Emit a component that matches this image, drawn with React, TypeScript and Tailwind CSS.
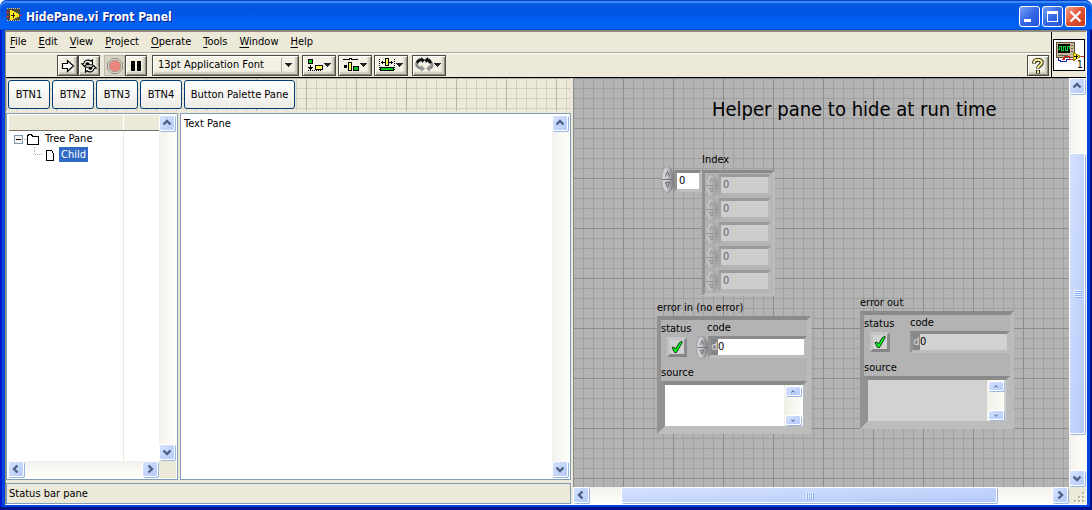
import { useId } from "react";
import type { ReactNode } from "react";
import { clsx } from "clsx";

type Direction = "up" | "down" | "left" | "right";

const MENUS = ["File", "Edit", "View", "Project", "Operate", "Tools", "Window", "Help"];
const PALETTE_BUTTONS = ["BTN1", "BTN2", "BTN3", "BTN4"];

const CHEVRONS: Record<Direction, string> = {
  up: "M1.5 6.5 5 3l3.5 3.5",
  down: "M1.5 3.5 5 7l3.5-3.5",
  left: "M6.5 1.5 3 5l3.5 3.5",
  right: "M3.5 1.5 7 5 3.5 8.5",
};

const SCROLL_FACE =
  "rounded-[2px] border border-white bg-linear-to-br from-[#d6e2fe] to-[#b4cafa] shadow-[1px_1px_0_#98b4e0]";

/* ---------- scroll bars ---------- */

function ScrollButton({ direction }: { direction: Direction }) {
  return (
    <button
      type="button"
      aria-label={`Scroll ${direction}`}
      className={clsx("flex size-4 shrink-0 items-center justify-center", SCROLL_FACE)}
    >
      <svg viewBox="0 0 10 10" className="size-[10px]">
        <path d={CHEVRONS[direction]} fill="none" stroke="#4d6185" strokeWidth="2.4" />
      </svg>
    </button>
  );
}

function VerticalScrollBar({ children }: { children?: ReactNode }) {
  return (
    <div className="flex w-[17px] shrink-0 flex-col items-start justify-between bg-linear-to-r from-[#f3f1ec] to-[#fefefb] pb-px">
      <ScrollButton direction="up" />
      {children}
      <ScrollButton direction="down" />
    </div>
  );
}

function HorizontalScrollBar({ children }: { children?: ReactNode }) {
  return (
    <div className="flex h-[17px] min-w-0 flex-1 items-start justify-between bg-linear-to-b from-[#f3f1ec] to-[#fefefb] pr-px">
      <ScrollButton direction="left" />
      {children}
      <ScrollButton direction="right" />
    </div>
  );
}

/* ---------- title bar ---------- */

function ViIcon() {
  return (
    <svg viewBox="0 0 16 16" className="size-4" shapeRendering="crispEdges">
      <path fill="#4a4a40" d="M1 1h13v13H1z" />
      <path stroke="#c9c9b8" strokeDasharray="1 1" d="M1 1.500h13M1 13.500h13" />
      <path stroke="#e02020" d="M0 5.500h3M0 9.500h3M12 8.500h4" />
      <path fill="#ffe818" d="M4 3h2v1h2v1h2v1h2v1h1v3h-2v1H9v1H7v1H4z" />
      <path stroke="#222" d="M5 8.500h4M7.500 6v5" />
    </svg>
  );
}

function TitleBar() {
  return (
    <header className="flex h-[30px] shrink-0 items-center justify-between rounded-t-[7px] bg-linear-to-b from-[#0f5fe0] from-0% via-[#0054e3] via-35% to-[#0064fa] to-90% pr-[6px] pl-[6px] shadow-[inset_0_1px_0_#0a45c8,inset_0_3px_1px_#3a8cf8,inset_0_-1px_0_#0049cf]">
      <div className="flex items-center gap-1">
        <ViIcon />
        <h1 className="pt-[3px] font-[DejaVu_Sans_Condensed,sans-serif] text-[12px] leading-4 font-bold text-white [text-shadow:1px_1px_0_#0a1883]">
          HidePane.vi Front Panel
        </h1>
      </div>
      <div className="flex gap-[2px] pt-[3px]">
        <button
          type="button"
          aria-label="Minimize"
          className="flex size-[21px] items-center justify-center rounded-[3px] border border-white bg-linear-to-br from-[#7ba0f5] via-[#3468e4] to-[#2454d8]"
        >
          <svg viewBox="0 0 19 19" className="size-[19px]">
            <path fill="#fff" d="M4 12h7v3H4z" />
          </svg>
        </button>
        <button
          type="button"
          aria-label="Maximize"
          className="flex size-[21px] items-center justify-center rounded-[3px] border border-white bg-linear-to-br from-[#7ba0f5] via-[#3468e4] to-[#2454d8]"
        >
          <svg viewBox="0 0 19 19" className="size-[19px]">
            <path fill="#fff" fillRule="evenodd" d="M4 4h11v11H4zM5 7v7h9V7z" />
          </svg>
        </button>
        <button
          type="button"
          aria-label="Close"
          className="flex size-[21px] items-center justify-center rounded-[3px] border border-white bg-linear-to-br from-[#f0a088] via-[#e05030] to-[#c83a18]"
        >
          <svg viewBox="0 0 19 19" className="size-[19px]">
            <path stroke="#fff" strokeWidth="2.300" d="m4.500 4.500 10 10m0-10-10 10" />
          </svg>
        </button>
      </div>
    </header>
  );
}

/* ---------- tool bar ---------- */

function ToolButton({ label, className, disabled, children }: {
  label: string;
  className?: string;
  disabled?: boolean;
  children: ReactNode;
}) {
  return (
    <button
      type="button"
      aria-label={label}
      disabled={disabled}
      className={clsx(
        "flex h-[21px] items-center justify-center border",
        disabled
          ? "border-[#bdbaac] bg-[#d8d5c6]"
          : "border-[#4d4b42] bg-[#f3f1e4] shadow-[inset_1px_1px_0_#fff,inset_-1px_-1px_0_#8e8c80,inset_-3px_-3px_2px_#cbc8b8]",
        className ?? "w-[22px]",
      )}
    >
      {children}
    </button>
  );
}

function AlignIcon() {
  return (
    <svg viewBox="0 0 28 17" className="h-[17px] w-[28px]" shapeRendering="crispEdges">
      <path fill="#00c820" stroke="#000" d="M3.500 2.500h4v4h-4z" />
      <path fill="#000" d="M5 8h1v2h2v1H7v1H6v1H5v-1H4v-1H3v-1h2z" />
      <path stroke="#000" strokeDasharray="1 1" d="M3 13.500h14" />
      <path fill="#ffff50" stroke="#000" d="M10.500 8.500h7v4h-7z" />
      <path fill="#222" d="M19 6h7v1h-1v1h-1v1h-1v1h-1V9h-1V8h-1V7h-1z" />
    </svg>
  );
}

function DistributeIcon() {
  return (
    <svg viewBox="0 0 28 17" className="h-[17px] w-[28px]" shapeRendering="crispEdges">
      <path fill="none" stroke="#000" d="M2 3V2.500h6V1.500h2v1h6V3" />
      <path fill="#000" d="M3 8h3v3H3z" />
      <path fill="#ffff50" stroke="#000" d="M7.500 5.500h3v8h-3z" />
      <path fill="#00c820" stroke="#000" d="M12.500 9.500h5v4h-5z" />
      <path fill="#222" d="M19 6h7v1h-1v1h-1v1h-1v1h-1V9h-1V8h-1V7h-1z" />
    </svg>
  );
}

function ResizeIcon() {
  return (
    <svg viewBox="0 0 28 17" className="h-[17px] w-[28px]" shapeRendering="crispEdges">
      <path stroke="#000" strokeDasharray="1 1" d="M2.500 2v12M17.500 2v12" />
      <path stroke="#000" d="M4 5.500h4M12 5.500h4M5.500 4v3M14.500 4v3" />
      <path fill="#ffff50" stroke="#000" d="M8.500 1.500h3v7h-3z" />
      <path fill="#00c820" stroke="#000" d="M3.500 10.500h13v3h-13z" />
      <path fill="#222" d="M19 6h7v1h-1v1h-1v1h-1v1h-1V9h-1V8h-1V7h-1z" />
    </svg>
  );
}

function ReorderIcon() {
  return (
    <svg viewBox="0 0 28 17" className="h-[17px] w-[28px]">
      <path fill="none" stroke="#8b8b8b" strokeWidth="2.800" d="M3 4c-3 3-1 7 4 7.500M14 4c4 2 4 6 0 7.500" />
      <path fill="#999" d="m6 8 4 3.500L6 15zM15 8l-4 3.500 4 3.500z" />
      <path fill="#111" d="M1 5c2-4 4-3.500 5-3.500V0l4 3.200L7 6V4.500C5 4.500 3 5 3 7zM17 6c-1-4-3-4.500-4-4.500V0L9 3.200 12 6V4.500c1 0 2 1 2 2z" />
      <path fill="#222" shapeRendering="crispEdges" d="M19 6h7v1h-1v1h-1v1h-1v1h-1V9h-1V8h-1V7h-1z" />
    </svg>
  );
}

function ToolBar() {
  return (
    <div className="flex h-[23px] items-center pr-[2px] pl-[51px]">
      <ToolButton label="Run" className="w-[21px]">
        <svg viewBox="0 0 14 14" className="size-[14px]">
          <path fill="#fff" stroke="#000" strokeWidth="1.200" d="M1.500 4.500h5v-3L12.500 7l-6 5.500v-3h-5z" />
        </svg>
      </ToolButton>
      <ToolButton label="Run continuously">
        <svg viewBox="0 0 16 14" className="h-[14px] w-4">
          <path
            fill="#fff"
            stroke="#000"
            strokeWidth="1.100"
            d="M3.500 7.500.8 4.800h1.700C3.500 1 7.500.2 10 2.200L11.500.8v5H6.500L8 4.200C6.500 3.200 5.200 3.800 5 4.800h1.300zM12.500 6.500l2.700 2.700h-1.700C12.500 13 8.500 13.800 6 11.800L4.500 13.200v-5h5L8 9.800c1.500 1 2.800.4 3-.6H9.700z"
          />
        </svg>
      </ToolButton>
      <ToolButton label="Abort" disabled className="ml-1 w-[21px]">
        <svg viewBox="0 0 16 16" className="size-4">
          <path fill="#d8d5c6" stroke="#908e84" d="M5 .5h6L15.500 5v6L11 15.500H5L.5 11V5z" />
          <path fill="#e88880" stroke="#a89890" d="M5.500 2.500h5l3 3v5l-3 3h-5l-3-3v-5z" />
        </svg>
      </ToolButton>
      <ToolButton label="Pause">
        <svg viewBox="0 0 10 10" className="size-[10px]">
          <path d="M0 0h4v10H0zM6 0h4v10H6z" />
        </svg>
      </ToolButton>

      <div className="relative ml-[5px] h-[21px] w-[147px] border border-[#4d4b42] bg-[#f3f1e4] shadow-[inset_1px_1px_0_#fff,inset_-1px_-1px_0_#8e8c80,inset_-3px_-3px_2px_#cbc8b8]">
        <select
          aria-label="Text settings"
          className="h-[17px] w-full appearance-none bg-transparent pr-5 pl-[5px] text-[11px] leading-4 text-black"
        >
          <option>13pt Application Font</option>
        </select>
        <span className="pointer-events-none absolute top-[2px] right-[3px] flex h-[14px] w-[14px] items-center justify-center border-l border-[#b4b1a3]">
          <svg viewBox="0 0 7 4" className="h-1 w-[7px]" shapeRendering="crispEdges">
            <path fill="#222" d="M0 0h7v1H6v1H5v1H4v1H3V3H2V2H1V1H0z" />
          </svg>
        </span>
      </div>

      <div className="ml-[3px] flex gap-[2px]">
        <ToolButton label="Align objects" className="w-[34px]"><AlignIcon /></ToolButton>
        <ToolButton label="Distribute objects" className="w-[34px]"><DistributeIcon /></ToolButton>
        <ToolButton label="Resize objects" className="w-[34px]"><ResizeIcon /></ToolButton>
      </div>
      <ToolButton label="Reorder" className="ml-1 w-[34px]"><ReorderIcon /></ToolButton>
      <ToolButton label="Show context help" className="ml-auto w-[22px]">
        <svg viewBox="0 0 12 16" className="h-4 w-3">
          <path fill="none" stroke="#222" strokeWidth="4" d="M2 5.500C2 .8 9.800.8 9.800 4.500 9.800 7.500 6 7.500 6 10.500M6 12v3.500" />
          <path fill="none" stroke="#fff890" strokeWidth="2" d="M2 5C2 .8 9.800.8 9.800 4.500 9.800 7.500 6 7.500 6 10M6 12.500v2.500" />
        </svg>
      </ToolButton>
    </div>
  );
}

function ConnectorIcon() {
  return (
    <svg viewBox="0 0 32 32" className="size-8" shapeRendering="crispEdges">
      <path fill="#fff" stroke="#000" d="M.5.500h31v31H.5z" />
      <path fill="#c8b898" stroke="#5a4a3a" d="M3.500 3.500h18v15h-18z" />
      <path fill="#000" d="M5 5h12v9H5z" />
      <path fill="none" stroke="#00d830" d="M5 10.500h1v-3h2v4h2v-4h2v4h2v-4h2v2" />
      <path stroke="#665" d="M18 6.500h2M18 9.500h2M18 12.500h2M5 16.500h10" />
      <path fill="none" stroke="#d82020" d="M9 20.500h2v-3h5v3h4v-3h11M10.500 18v3" />
      <path fill="none" stroke="#2020c0" d="M5.500 19v2.500h2v1h6v-2h2" />
      <path fill="#ffe818" stroke="#998800" d="M20.500 13.500v8l7-4z" />
      <path stroke="#000" d="M21 17.500h4M23.500 16v4" />
      <text x="24" y="29" fontSize="10" fontFamily="DejaVu Sans Condensed">1</text>
    </svg>
  );
}

/* ---------- left panes ---------- */

function TreePane() {
  return (
    <section aria-label="Tree" className="flex w-[172px] shrink-0 flex-col border border-[#7f9db9] bg-white p-px">
      <div className="flex min-h-0 flex-1">
        <div className="flex min-w-0 flex-1 flex-col pl-px">
          <div className="flex h-4 shrink-0 border-b border-[#77756b] bg-[#ece9d8]">
            <span className="w-[115px] border-r border-white" />
          </div>
          <div className="flex flex-1">
            <ul className="w-[115px] border-r border-[#ece9d8] text-[11px] leading-4">
              <li>
                <div className="flex items-center pl-[5px]">
                  <svg viewBox="0 0 28 16" className="h-4 w-7" shapeRendering="crispEdges">
                    <path fill="#f4f2ea" stroke="#7898b5" d="M.5 4.500h8v8h-8z" />
                    <path stroke="#000" d="M2 8.500h5" />
                    <path stroke="#aaa" strokeDasharray="1 1" d="M10 8.500h3" />
                    <path fill="#fff" stroke="#000" d="M13.500 5.500v8h11v-8h-6l-1-2h-3l-1 2z" />
                  </svg>
                  <span className="pl-[3px]">Tree Pane</span>
                </div>
                <ul>
                  <li className="flex h-[15px] items-center pl-[25px]">
                    <svg viewBox="0 0 22 16" className="h-4 w-[22px]" shapeRendering="crispEdges">
                      <path fill="none" stroke="#aaa" strokeDasharray="1 1" d="M.5 0v7.500H9" />
                      <path fill="#fff" stroke="#000" d="M12.500 3.500h5l2 3v7h-7z" />
                    </svg>
                    <span className="ml-[3px] bg-[#316ac5] px-[2px] leading-[15px] text-white">Child</span>
                  </li>
                </ul>
              </li>
            </ul>
          </div>
        </div>
        <VerticalScrollBar />
      </div>
      <div className="flex shrink-0">
        <HorizontalScrollBar />
        <span className="size-[17px] bg-[#ece9d8]" />
      </div>
    </section>
  );
}

function LeftPanes() {
  return (
    <div className="flex min-w-0 flex-col pr-[2px]">
      <div className="h-[35px] shrink-0">
        <div className="flex h-[33px] gap-[2px] bg-[#ece9d8] bg-[linear-gradient(to_right,#b9b6a9_1px,transparent_1px),linear-gradient(to_bottom,#b9b6a9_1px,transparent_1px),linear-gradient(to_right,#d2cfc0_1px,transparent_1px),linear-gradient(to_bottom,#d2cfc0_1px,transparent_1px)] bg-size-[50px_50px,50px_50px,10px_10px,10px_10px] pt-[2px] pl-[2px]">
          {PALETTE_BUTTONS.map((name) => (
            <button
              key={name}
              type="button"
              className="h-[29px] w-[42px] rounded-[3px] border border-[#003c74] bg-linear-to-b from-white to-[#ecebe5] pt-[2px]"
            >
              {name}
            </button>
          ))}
          <button
            type="button"
            className="h-[29px] w-[111px] rounded-[3px] border border-[#003c74] bg-linear-to-b from-white to-[#ecebe5] pt-[2px]"
          >
            Button Palette Pane
          </button>
        </div>
      </div>
      <div className="flex min-h-0 flex-1 gap-[2px]">
        <TreePane />
        <div className="flex min-w-0 flex-1 border border-[#7f9db9] bg-white p-px">
          <textarea
            aria-label="Text"
            defaultValue="Text Pane"
            className="min-w-0 flex-1 resize-none px-[2px] pt-px text-[11px] leading-4 outline-none"
          />
          <VerticalScrollBar />
        </div>
      </div>
      <footer className="mt-[3px] h-[21px] shrink-0 border border-[#7f9db9] px-[2px] leading-[19px]">
        Status bar pane
      </footer>
    </div>
  );
}

/* ---------- front panel controls ---------- */

function Spinner({ dimmed, className }: { dimmed?: boolean; className?: string }) {
  return (
    <svg viewBox="0 0 13 26" preserveAspectRatio="none" className={clsx("shrink-0", dimmed && "opacity-50", className)}>
      <defs>
        <linearGradient id="spinner-metal">
          <stop offset="0" stopColor="#c4c4c6" />
          <stop offset="0.350" stopColor="#d2d2d6" />
          <stop offset="1" stopColor="#77777c" />
        </linearGradient>
      </defs>
      <ellipse cx="6.500" cy="13" rx="6.300" ry="12.700" fill="url(#spinner-metal)" stroke="#808084" strokeWidth=".5" />
      <path stroke="#77777a" d="M1 13h11" />
      <path fill="#c6c6ca" stroke="#505054" strokeWidth=".8" d="M4.500 10 6.500 5.500l2 4.500M4.500 16h4l-2 4.500z" />
    </svg>
  );
}

// Recessed frame that LabVIEW draws round every control
const RECESS = "border-t-[#8a8a8a] border-l-[#929292] border-r-[#bbbbbb] border-b-[#bdbdbd]";

function NumericField({ id, label, dimmed, radix, className }: {
  id?: string;
  label?: string;
  dimmed?: boolean;
  radix?: boolean;
  className: string;
}) {
  return (
    <div className={clsx("flex border-[3px]", RECESS, className)}>
      {radix && <span className="w-[7px] bg-[#858585] text-center text-[11px] leading-4 text-[#ddd]">d</span>}
      <input
        id={id}
        aria-label={label}
        defaultValue="0"
        className={clsx(
          "w-0 min-w-0 flex-1 text-[11px] leading-4 outline-none",
          dimmed ? "bg-[#d2d2d2]" : "bg-white",
          !radix && "pl-[2px]",
        )}
      />
    </div>
  );
}

function IndexArray() {
  return (
    <div className="absolute top-[74px] left-[88px]">
      <h3 className="pl-[41px] text-[11px] leading-4">Index</h3>
      <div className="flex items-start pt-[2px]">
        <Spinner className="-mt-1 h-[27px] w-[13px]" />
        <NumericField label="Array index" className="h-[22px] w-[28px]" />
        <div className={clsx("w-[73px] border-[3px] bg-[#b3b3b3]", RECESS)}>
          {[0, 1, 2, 3, 4].map((row) => (
            <div key={row} className="flex h-6 items-center">
              <Spinner dimmed className="h-[23px] w-[13px]" />
              <div className="flex h-[22px] w-[53px] border-[3px] border-t-[#9b9b9b] border-r-[#bababa] border-b-[#b5b5b5] border-l-[#a3a3a3]">
                <input
                  aria-label={`Element ${row}`}
                  defaultValue="0"
                  disabled
                  className="w-full bg-[#cdcdcd] pl-[2px] text-[11px] leading-4 text-[#6a6a6a]"
                />
              </div>
            </div>
          ))}
        </div>
      </div>
    </div>
  );
}

function SmallScroll() {
  return (
    <div className="flex w-[17px] flex-col items-center justify-between bg-linear-to-r from-[#efeee6] to-[#fdfdf8] py-px">
      <button type="button" aria-label="Scroll up" className={clsx("flex h-[10px] w-4 items-center justify-center", SCROLL_FACE)}>
        <svg viewBox="0 0 4 3" className="h-[3px] w-1"><path d="m.5 2.500 1.500-2 1.500 2" fill="none" stroke="#4d6185" /></svg>
      </button>
      <button type="button" aria-label="Scroll down" className={clsx("flex h-[10px] w-4 items-center justify-center", SCROLL_FACE)}>
        <svg viewBox="0 0 4 3" className="h-[3px] w-1"><path d="m.5.500 1.500 2 1.500-2" fill="none" stroke="#4d6185" /></svg>
      </button>
    </div>
  );
}

function ErrorCluster({ title, indicator, className }: {
  title: string;
  indicator?: boolean;
  className: string;
}) {
  const id = useId();

  return (
    <fieldset className={clsx("absolute w-[154px]", className)}>
      <legend className="text-[11px] leading-4">{title}</legend>
      <div className={clsx("h-[118px] border-4 bg-[#b3b3b3]", RECESS)}>
        <div className="flex h-[45px]">
          <div className="w-[46px] pt-[1px]">
            <label htmlFor={`${id}-status`} className="block leading-4">status</label>
            <button
              id={`${id}-status`}
              type="button"
              className="ml-[6px] flex size-5 items-center justify-center border-[3px] border-t-[#c6c6c6] border-r-[#8b8b8b] border-b-[#858585] border-l-[#c2c2c2] bg-[#d2d2d2]"
            >
              <svg viewBox="0 0 12 14" className="h-[14px] w-3 shrink-0">
                <path fill="#00f018" stroke="#000" strokeWidth=".7" d="M1 7.500 3 7l1.500 2L8 3l3-2v2L5.500 12.500h-2z" />
              </svg>
            </button>
          </div>
          <div className="min-w-0 flex-1">
            <label htmlFor={`${id}-code`} className="block leading-4">code</label>
            <div className="flex">
              {!indicator && <Spinner className="-ml-[11px] h-[23px] w-[12px]" />}
              <NumericField id={`${id}-code`} radix dimmed={indicator} className="h-[22px] flex-1" />
            </div>
          </div>
        </div>
        <label htmlFor={`${id}-source`} className="block h-4 leading-4">source</label>
        <div className={clsx("flex h-[49px] border-4", RECESS)}>
          <textarea
            id={`${id}-source`}
            className={clsx("min-w-0 flex-1 resize-none outline-none", indicator ? "bg-[#d2d2d2]" : "bg-white")}
          />
          <div className={clsx("flex pr-[2px]", indicator ? "bg-[#d2d2d2]" : "bg-white")}>
            <SmallScroll />
          </div>
        </div>
      </div>
    </fieldset>
  );
}

function HelperPane() {
  return (
    <div className="grid min-w-0 grid-cols-[minmax(0,1fr)_17px] grid-rows-[minmax(0,1fr)_17px]">
      <main className="relative overflow-hidden bg-[#b3b3b3] bg-[linear-gradient(to_right,#8c8c8c_1px,transparent_1px),linear-gradient(to_bottom,#8c8c8c_1px,transparent_1px),linear-gradient(to_right,#a0a0a0_1px,transparent_1px),linear-gradient(to_bottom,#a0a0a0_1px,transparent_1px)] bg-size-[50px_50px,50px_50px,10px_10px,10px_10px]">
        <h2 className="absolute top-[19px] left-[139px] text-[20px] leading-6 whitespace-nowrap">
          Helper pane to hide at run time
        </h2>
        <IndexArray />
        <ErrorCluster title="error in (no error)" className="top-[222px] left-[84px]" />
        <ErrorCluster title="error out" indicator className="top-[217px] left-[287px]" />
      </main>
      <VerticalScrollBar>
        <div className="flex min-h-0 w-4 flex-1 flex-col pt-[59px] pb-9">
          <div className={clsx("flex flex-1 flex-col items-center justify-center gap-px", SCROLL_FACE)}>
            {[0, 1, 2, 3].map((n) => (
              <span key={n} className="h-px w-[7px] bg-[#eef4fe] shadow-[1px_1px_0_#8cb0f8]" />
            ))}
          </div>
        </div>
      </VerticalScrollBar>
      <HorizontalScrollBar>
        <div className="flex h-4 min-w-0 flex-1 pr-[55px] pl-8">
          <div className={clsx("flex flex-1 items-center justify-center gap-px", SCROLL_FACE)}>
            {[0, 1, 2, 3].map((n) => (
              <span key={n} className="h-[7px] w-px bg-[#eef4fe] shadow-[1px_1px_0_#8cb0f8]" />
            ))}
          </div>
        </div>
      </HorizontalScrollBar>
      <svg viewBox="0 0 17 17" className="size-[17px]" shapeRendering="crispEdges">
        <path fill="#fff" d="M14 6h2v2h-2zM10 10h2v2h-2zM14 10h2v2h-2zM6 14h2v2H6zM10 14h2v2h-2zM14 14h2v2h-2z" />
        <path fill="#b8b4a2" d="M13 5h2v2h-2zM9 9h2v2H9zM13 9h2v2h-2zM5 13h2v2H5zM9 13h2v2H9zM13 13h2v2h-2z" />
      </svg>
    </div>
  );
}

export default function App() {
  return (
    <div className="flex h-screen flex-col overflow-hidden rounded-t-[7px] bg-[#0046dc] font-[DejaVu_Sans_Condensed,Noto_Sans,sans-serif] text-[11px] text-black">
      <TitleBar />
      <div className="flex min-h-0 flex-1 bg-[#0046dc] pr-[5px] pb-[5px] pl-[5px] shadow-[inset_0_-3px_0_#00138c,inset_2px_0_0_#0019cf,inset_-2px_0_0_#00138c]">
        <div className="flex min-w-0 flex-1 flex-col border-t-2 border-r border-b border-l border-t-[#8e8b7e] border-r-white border-b-white border-l-[#8e8b7e] bg-[#ece9d8]">
          <div className="flex shrink-0 border-b border-black">
            <div className="min-w-0 flex-1 border-r border-black">
              <nav aria-label="Menu" className="flex h-[21px] gap-3 border-b border-[#aca899] pl-1">
                {MENUS.map((name) => (
                  <button key={name} type="button" className="leading-5">
                    <u className="underline-offset-2">{name[0]}</u>
                    {name.slice(1)}
                  </button>
                ))}
              </nav>
              <div className="border-t border-white">
                <ToolBar />
              </div>
            </div>
            <div className="flex w-[34px] items-center justify-center">
              <ConnectorIcon />
            </div>
          </div>
          <div className="grid min-h-0 flex-1 grid-cols-[567fr_513fr] grid-rows-[minmax(0,1fr)]">
            <LeftPanes />
            <HelperPane />
          </div>
        </div>
      </div>
    </div>
  );
}
